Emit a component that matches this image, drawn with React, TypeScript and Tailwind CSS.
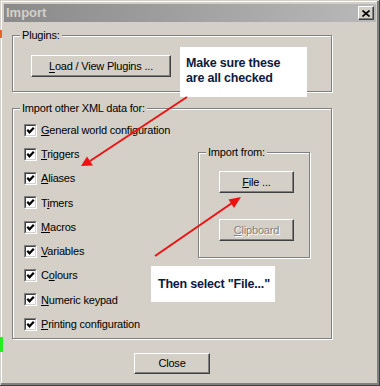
import type { ReactNode } from "react";

const raised =
  "border border-t-white border-l-white border-r-[#404040] border-b-[#404040] shadow-[inset_-1px_-1px_0_#808080] bg-[#d4d0c8]";

function GroupBox({ label, className, children }: { label: string; className: string; children?: ReactNode }) {
  return (
    <div className={`relative border border-[#808080] shadow-[inset_1px_1px_0_#fff,1px_1px_0_#fff] ${className}`}>
      <span className="absolute -top-[8px] left-[7px] bg-[#d4d0c8] px-[2px] leading-[14px]">{label}</span>
      {children}
    </div>
  );
}

function Check() {
  return (
    <span className="w-[13px] h-[13px] shrink-0 border border-t-[#808080] border-l-[#808080] border-r-white border-b-white">
      <span className="block w-full h-full bg-white border border-t-[#404040] border-l-[#404040] border-r-[#d4d0c8] border-b-[#d4d0c8]">
        <svg width="9" height="9" viewBox="0 0 9 9" className="block">
          <path d="M1.3 3.8 L3.5 6.3 L7.8 1.7" fill="none" stroke="#000" strokeWidth="2.2" />
        </svg>
      </span>
    </span>
  );
}

function Row({ children }: { children: ReactNode }) {
  return (
    <div className="flex items-center gap-[4px] h-[24.25px]">
      <Check />
      <span>{children}</span>
    </div>
  );
}

export default function App() {
  return (
    <div className="relative w-[380px] h-[386px] overflow-hidden bg-[#d4d0c8] p-[4px] text-[11px] tracking-[-0.2px] text-black font-['Liberation_Sans',Arial,sans-serif] shadow-[inset_-1px_-1px_0_#404040,inset_1px_1px_0_#d4d0c8,inset_-3px_-3px_0_#808080,inset_2px_2px_0_#fff]">
      {/* title bar */}
      <div className="h-[18px] flex items-center justify-between pl-[2px] pr-[2px] bg-gradient-to-r from-[#8a8a8a] to-[#b9b9b9]">
        <span className="text-[13px] font-bold text-[#d4d0c8] tracking-normal">Import</span>
        <span className={`w-[16px] h-[14px] flex items-center justify-center ${raised}`}>
          <svg width="8" height="7" viewBox="0 0 8 7">
            <path d="M0.5 0.5 L7.5 6.5 M7.5 0.5 L0.5 6.5" stroke="#000" strokeWidth="1.6" />
          </svg>
        </span>
      </div>

      <GroupBox label="Plugins:" className="ml-[8px] mt-[13px] w-[320px] h-[57px]">
        <div className={`ml-[18px] mt-[19px] w-[140px] h-[22px] flex items-center justify-center ${raised}`}>
          <span>
            <u className="underline-offset-2">L</u>oad / View Plugins ...
          </span>
        </div>
      </GroupBox>

      <GroupBox label="Import other XML data for:" className="ml-[8px] mt-[16px] w-[320px] h-[231px]">
        <div className="flex pl-[11px] pt-[9px]">
          <div className="w-[174px] flex flex-col">
            <Row><u>G</u>eneral world configuration</Row>
            <Row><u>T</u>riggers</Row>
            <Row><u>A</u>liases</Row>
            <Row>T<u>i</u>mers</Row>
            <Row><u>M</u>acros</Row>
            <Row><u>V</u>ariables</Row>
            <Row>C<u>o</u>lours</Row>
            <Row><u>N</u>umeric keypad</Row>
            <Row><u>P</u>rinting configuration</Row>
          </div>
          <GroupBox label="Import from:" className="mt-[34px] w-[112px] h-[106px]">
            <div className={`ml-[20px] mt-[18px] w-[75px] h-[22px] flex items-center justify-center ${raised}`}>
              <span><u>F</u>ile ...</span>
            </div>
            <div className={`ml-[20px] mt-[26px] w-[75px] h-[22px] flex items-center justify-center ${raised}`}>
              <span className="text-[#808080] [text-shadow:1px_1px_0_#fff]"><u>C</u>lipboard</span>
            </div>
          </GroupBox>
        </div>
      </GroupBox>

      <div className={`ml-[130px] mt-[14px] w-[76px] h-[21px] flex items-center justify-center ${raised}`}>
        <span>Close</span>
      </div>

      {/* annotations */}
      <div className="absolute left-[180px] top-[47px] w-[127px] h-[50px] bg-white px-[6px] pt-[9px] text-[12.5px] leading-[15px] font-bold tracking-[-0.2px] text-[#0d1a3d]">
        Make sure these
        <br />
        are all checked
      </div>
      <div className="absolute left-[151px] top-[266px] w-[124px] h-[36px] bg-white pl-[7px] pt-[11px] text-[12.5px] leading-[15px] font-bold tracking-[-0.2px] text-[#0d1a3d]">
        Then select "File..."
      </div>
      <svg className="absolute left-0 top-0 pointer-events-none" width="380" height="386" viewBox="0 0 380 386">
        <line x1="187" y1="97" x2="90" y2="161" stroke="#ee1111" strokeWidth="2" />
        <polygon points="81,166 93,165.5 87,156.5" fill="#ee1111" />
        <line x1="155" y1="256" x2="232" y2="203" stroke="#ee1111" strokeWidth="2" />
        <polygon points="241,197 234,208 228.5,199.5" fill="#ee1111" />
      </svg>
      <span className="absolute left-0 top-[30px] w-[2px] h-[8px] bg-[#e8622a]" />
      <span className="absolute left-0 top-[337px] w-[3px] h-[15px] bg-[#22ee22]" />
    </div>
  );
}
